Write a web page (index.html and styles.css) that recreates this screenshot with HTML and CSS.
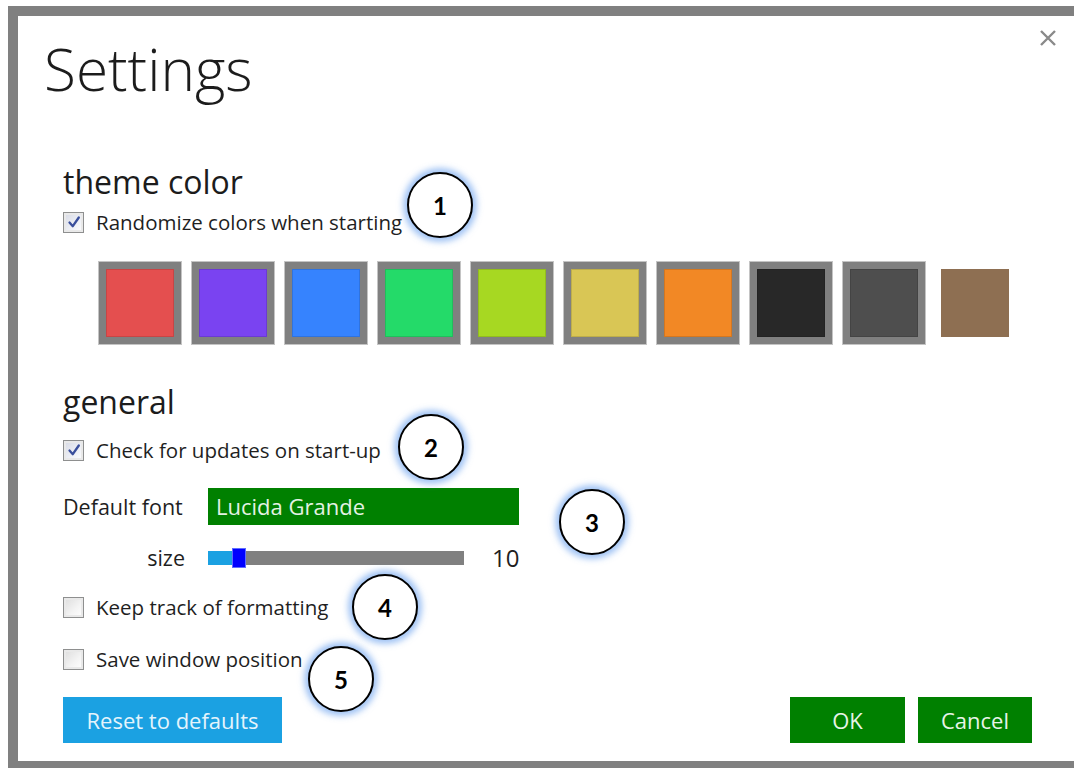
FILE: index.html
```html
<!DOCTYPE html>
<html lang="en">
<head>
<meta charset="utf-8">
<title>Settings</title>
<link rel="stylesheet" href="styles.css">
</head>
<body>
<div class="dialog">
  <button class="close" aria-label="Close">
    <svg width="18" height="18" viewBox="0 0 18 18"><path d="M2 2 L16 16 M16 2 L2 16" stroke="#8a8a8a" stroke-width="2.4" fill="none"/></svg>
  </button>

  <h1 class="title">Settings</h1>

  <h2 class="heading heading-theme">theme color</h2>
  <label class="check-row row-randomize">
    <span class="box checked"><svg width="16" height="16" viewBox="0 0 16 16"><path d="M3.5 8.5 L6.8 12.2 L12.8 3.5" stroke="#3a4f9c" stroke-width="2.3" fill="none" stroke-linecap="round" stroke-linejoin="round"/></svg></span>
    <span class="label">Randomize colors when starting</span>
  </label>

  <div class="swatches">
    <span class="swatch" style="background-color:#e44f4f"></span>
    <span class="swatch" style="background-color:#7a43f1"></span>
    <span class="swatch" style="background-color:#3683fe"></span>
    <span class="swatch" style="background-color:#24da69"></span>
    <span class="swatch" style="background-color:#a7d822"></span>
    <span class="swatch" style="background-color:#d9c655"></span>
    <span class="swatch" style="background-color:#f28825"></span>
    <span class="swatch" style="background-color:#282828"></span>
    <span class="swatch" style="background-color:#4e4e4e"></span>
    <span class="swatch current" style="background-color:#8e6f52"></span>
  </div>

  <h2 class="heading heading-general">general</h2>
  <label class="check-row row-updates">
    <span class="box checked"><svg width="16" height="16" viewBox="0 0 16 16"><path d="M3.5 8.5 L6.8 12.2 L12.8 3.5" stroke="#3a4f9c" stroke-width="2.3" fill="none" stroke-linecap="round" stroke-linejoin="round"/></svg></span>
    <span class="label">Check for updates on start-up</span>
  </label>

  <div class="font-row">
    <span class="field-label">Default font</span>
    <div class="font-field">Lucida Grande</div>
  </div>

  <div class="size-row">
    <span class="field-label size-label">size</span>
    <div class="slider">
      <span class="slider-fill"></span>
      <span class="slider-thumb"></span>
    </div>
    <span class="size-value">10</span>
  </div>

  <label class="check-row row-track">
    <span class="box"></span>
    <span class="label">Keep track of formatting</span>
  </label>

  <label class="check-row row-position">
    <span class="box"></span>
    <span class="label">Save window position</span>
  </label>

  <div class="actions">
    <button class="btn btn-reset">Reset to defaults</button>
    <div class="actions-right">
      <button class="btn btn-ok">OK</button>
      <button class="btn btn-cancel">Cancel</button>
    </div>
  </div>

  <span class="callout c1">1</span>
  <span class="callout c2">2</span>
  <span class="callout c3">3</span>
  <span class="callout c4">4</span>
  <span class="callout c5">5</span>
</div>
</body>
</html>
```

FILE: styles.css
```css
html, body {
  margin: 0;
  padding: 0;
  background: #ffffff;
  overflow: hidden;
}

body {
  width: 1074px;
  height: 768px;
  font-family: "Open Sans", "Noto Sans", sans-serif;
  color: #1f1f1f;
}

.dialog {
  position: relative;
  margin: 6px 0 0 8px;
  border: 10px solid #808080;
  background: #ffffff;
  padding: 0 48px 18px 45px;
  box-sizing: content-box;
  width: 969px;
  display: flex;
  flex-direction: column;
  align-items: flex-start;
}

.close {
  position: absolute;
  left: 1021px;
  top: 13px;
  width: 18px;
  height: 18px;
  padding: 0;
  border: 0;
  background: none;
  display: flex;
}

.title {
  margin: 12px 0 0 -19px;
  height: 80px;
  line-height: 80px;
  font-size: 58.5px;
  font-weight: 300;
  color: #1c1c1c;
}

.heading {
  margin: 0;
  height: 40px;
  line-height: 40px;
  font-size: 32px;
  font-weight: 400;
  color: #1c1c1c;
}

.heading-theme { margin-top: 54px; }
.heading-general { margin-top: 38px; }

.check-row {
  display: flex;
  align-items: center;
  gap: 12px;
  height: 24px;
}

.row-randomize { margin-top: 8px; }
.row-updates { margin-top: 16px; }
.row-track { margin-top: 25px; }
.row-position { margin-top: 28px; }

.box {
  width: 19px;
  height: 19px;
  border: 1px solid #8e8f8f;
  background: linear-gradient(135deg, #dcdcdc 0%, #f4f4f4 60%, #ffffff 100%);
  box-shadow: inset 0 0 0 2px #e9e9e9;
  display: flex;
  align-items: center;
  justify-content: center;
  flex: none;
}

.box.checked {
  background: linear-gradient(135deg, #d6d9e4 0%, #eef0f6 60%, #ffffff 100%);
}

.label {
  font-size: 20.5px;
  line-height: 24px;
  color: #1f1f1f;
}

.swatches {
  margin: 28px 0 0 36px;
  display: flex;
  gap: 11px;
}

.swatch {
  width: 68px;
  height: 68px;
  border: 7px solid #808080;
  background-clip: padding-box;
  box-shadow: 0 0 0 1px #c4c4c4, inset 0 0 0 1px rgba(0, 0, 0, 0.12);
}

.swatch.current {
  border-color: transparent;
  box-shadow: none;
  margin-left: -2px;
}

.font-row {
  margin-top: 26px;
  display: flex;
  align-items: center;
  height: 37px;
}

.field-label {
  width: 145px;
  font-size: 21.5px;
  line-height: 24px;
  color: #1f1f1f;
}

.font-field {
  width: 303px;
  height: 37px;
  padding-left: 8px;
  background: #008000;
  color: #e4f2e4;
  font-size: 22px;
  line-height: 37px;
}

.size-row {
  margin-top: 21px;
  display: flex;
  align-items: center;
  height: 24px;
}

.size-label {
  text-align: right;
  padding-right: 23px;
  width: 122px;
}

.slider {
  position: relative;
  width: 256px;
  height: 14px;
  background: #808080;
}

.slider-fill {
  position: absolute;
  left: 0;
  top: 0;
  width: 24px;
  height: 14px;
  background: #1ba1e2;
}

.slider-thumb {
  position: absolute;
  left: 24px;
  top: -3px;
  width: 12px;
  height: 18px;
  background: #0000ff;
  border: 1px solid #5f6cff;
}

.size-value {
  margin-left: 28px;
  font-size: 24px;
  line-height: 24px;
  color: #1f1f1f;
}

.actions {
  margin-top: 26px;
  align-self: stretch;
  display: flex;
  justify-content: space-between;
}

.actions-right {
  display: flex;
  gap: 13px;
}

.btn {
  height: 46px;
  border: 0;
  padding: 0;
  font-family: "Open Sans", "Noto Sans", sans-serif;
  font-size: 22px;
  color: #e8f4e8;
}

.btn-reset {
  width: 219px;
  background: #1ba1e2;
  color: #e4f4fc;
}

.btn-ok {
  width: 115px;
  background: #008000;
}

.btn-cancel {
  width: 114px;
  background: #008000;
}

.callout {
  position: absolute;
  width: 62px;
  height: 62px;
  margin: -33px 0 0 -33px;
  border: 2px solid #000000;
  border-radius: 50%;
  background: #ffffff;
  box-shadow: 0 0 6px 4px rgba(120, 170, 240, 0.7);
  display: flex;
  align-items: center;
  justify-content: center;
  font-family: "Lato", "Open Sans", sans-serif;
  font-weight: 700;
  font-size: 24px;
  color: #000000;
}

.c1 { left: 422px; top: 189px; }
.c2 { left: 413px; top: 431px; }
.c3 { left: 574px; top: 506px; }
.c4 { left: 367px; top: 591px; }
.c5 { left: 323px; top: 663px; }
```
